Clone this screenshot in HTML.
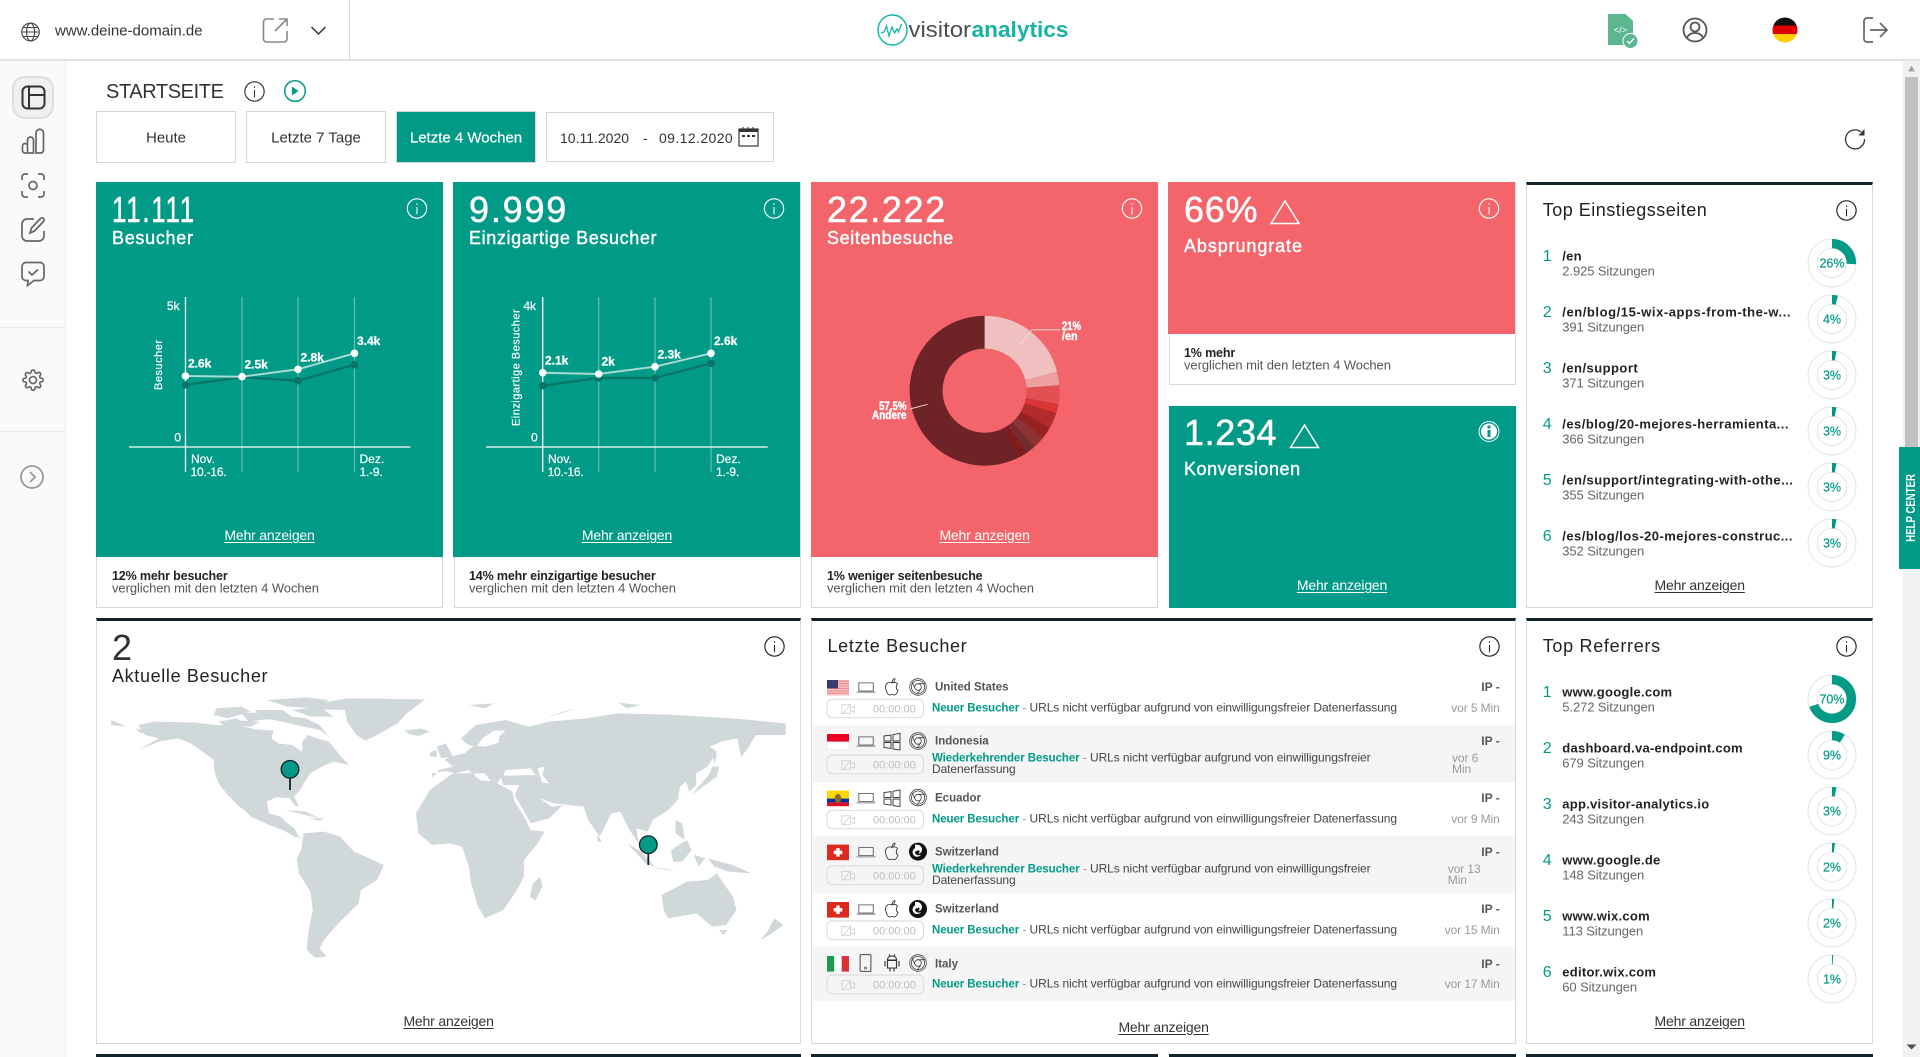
<!DOCTYPE html>
<html lang="de"><head><meta charset="utf-8"><title>Visitor Analytics</title>
<style>
html,body{margin:0;padding:0;background:#fff}
body{width:1920px;height:1057px;overflow:hidden;position:relative;font-family:"Liberation Sans",Arial,sans-serif;color:#333}
.b{position:absolute;box-sizing:border-box}
.card{position:absolute;box-sizing:border-box;border:1.5px solid #d8d8d8;background:#fff}
.dark{border-top:3.5px solid #13232b}
.t{position:absolute;white-space:nowrap;line-height:1;transform:translateY(-50%)}
.c{position:absolute;white-space:nowrap;line-height:1;transform:translate(-50%,-50%)}
.w{color:#fff}
.big{font-size:36px}
.w.big{-webkit-text-stroke:.5px #fff}
.lab{font-size:18px;-webkit-text-stroke:.4px currentColor}
.more{font-size:14px;letter-spacing:-.18px;text-decoration:underline;text-underline-offset:2px;margin-top:-1px}
.fb{font-size:12.5px;font-weight:bold;letter-spacing:-.15px;color:#222}
.fs{font-size:13px;letter-spacing:-.07px;color:#555}
.num{font-size:16px;color:#009a87;margin-top:1px}
.nm{font-size:13px;font-weight:bold;letter-spacing:.26px;color:#222}
.l{letter-spacing:.46px}
.sb{font-size:13px;letter-spacing:-.1px;color:#666}
.cty{font-size:11.5px;font-weight:bold;color:#555;margin-top:1px}
.ip{font-size:12px;font-weight:bold;color:#555}
.tm{font-size:12px;letter-spacing:-.1px;color:#9a9a9a}
.dur{font-size:11px;color:#bdbdbd;margin-top:1px}
.msg{font-size:12px;letter-spacing:-.08px;color:#444}
.msg b{color:#009a87;font-size:11.5px}
.msg i{font-style:normal;color:#999}
svg text{font-family:"Liberation Sans",Arial,sans-serif}
</style></head><body>

<!-- scrollbar -->
<div class="b" style="left:1903px;top:60px;width:17px;height:997px;background:#f1f1f1"></div>
<div class="b" style="left:1905px;top:77px;width:13px;height:485px;background:#c1c1c1"></div>

<!-- sidebar -->
<div class="b" style="left:0;top:60px;width:66px;height:997px;background:#f9fafa;border-right:1px solid #eceeee"></div>
<div class="b" style="left:0;top:327px;width:66px;height:1px;background:#e8eaea"></div>
<div class="b" style="left:0;top:431px;width:66px;height:1px;background:#e8eaea"></div>
<div class="b" style="left:12px;top:76px;width:42px;height:43px;background:#f0f0f0;border:2px solid #dedede;border-radius:13px"></div>

<!-- header -->
<div class="b" style="left:0;top:0;width:1920px;height:61px;background:#fff;border-bottom:2px solid #dfe4e7"></div>
<div class="b" style="left:349px;top:0;width:1px;height:60px;background:#d5d9db"></div>
<div class="t" style="left:55px;top:30.5px;font-size:15px;color:#333">www.deine-domain.de</div>

<!-- page head -->
<div class="t" style="left:106px;top:91.5px;font-size:20px;letter-spacing:-.4px;color:#333">STARTSEITE</div>
<div class="b" style="left:96px;top:111px;width:140px;height:52px;border:1.5px solid #d6d6d6"></div>
<div class="b" style="left:246px;top:111px;width:140px;height:52px;border:1.5px solid #d6d6d6"></div>
<div class="b" style="left:396px;top:111px;width:140px;height:52px;background:#009a87;border:1.5px solid #d6d6d6"></div>
<div class="b" style="left:546px;top:112px;width:228px;height:50px;border:1.5px solid #d6d6d6"></div>
<div class="c" style="left:166px;top:138px;font-size:15px">Heute</div>
<div class="c" style="left:316px;top:138px;font-size:15px">Letzte 7 Tage</div>
<div class="c w" style="left:466px;top:138px;font-size:15px;-webkit-text-stroke:.2px #fff">Letzte 4 Wochen</div>
<div class="t" style="left:560px;top:138px;font-size:14px">10.11.2020</div>
<div class="t" style="left:643px;top:138px;font-size:14px">-</div>
<div class="t" style="left:659px;top:138px;font-size:14px;letter-spacing:.4px">09.12.2020</div>

<!-- top cards -->
<div class="card" style="left:96px;top:182px;width:347px;height:426px"><div style="position:absolute;left:-1.5px;top:-1.5px;width:347px;height:375px;background:#009a87"></div></div>
<div class="card" style="left:453.6px;top:182px;width:347px;height:426px"><div style="position:absolute;left:-1.5px;top:-1.5px;width:347px;height:375px;background:#009a87"></div></div>
<div class="card" style="left:811.3px;top:182px;width:347px;height:426px"><div style="position:absolute;left:-1.5px;top:-1.5px;width:347px;height:375px;background:#f3656a"></div></div>
<div class="card" style="left:1168.5px;top:182px;width:347px;height:202.5px"><div style="position:absolute;left:-1.5px;top:-1.5px;width:347px;height:152px;background:#f3656a"></div></div>
<div class="b" style="left:1168.5px;top:406px;width:347px;height:202px;background:#009a87"></div>
<div class="card dark" style="left:1526px;top:182px;width:347px;height:426px"></div>
<div class="card dark" style="left:96px;top:618px;width:704.5px;height:425.5px"></div>
<div class="card dark" style="left:811.3px;top:618px;width:704.5px;height:425.5px"></div>
<div class="card dark" style="left:1526px;top:618px;width:347px;height:425.5px"></div>
<div class="b" style="left:96px;top:1054px;width:704.5px;height:3px;background:#13232b"></div>
<div class="b" style="left:811.3px;top:1054px;width:346.7px;height:3px;background:#13232b"></div>
<div class="b" style="left:1168.5px;top:1054px;width:347px;height:3px;background:#13232b"></div>
<div class="b" style="left:1526px;top:1054px;width:347px;height:3px;background:#13232b"></div>

<!-- visitor rows bg -->
<div class="b" style="left:812.5px;top:725px;width:702px;height:57px;background:#f5f5f5"></div>
<div class="b" style="left:812.5px;top:836px;width:702px;height:57px;background:#f5f5f5"></div>
<div class="b" style="left:812.5px;top:947px;width:702px;height:54px;background:#f5f5f5"></div>

<!-- world map -->
<svg style="position:absolute;left:90px;top:610px" width="720" height="447" viewBox="0 0 1568 1341" preserveAspectRatio="none" fill="#d1d8da">
<path d="M105 345L140 335 230 338 270 345 320 345 360 358 400 362 395 385 410 400 440 405 462 425 462 395 475 375 495 385 520 395 535 420 550 445 565 465 530 455 505 470 480 490 470 510 460 535 445 560 455 590 445 585 435 565 405 562 385 575 390 610 415 620 430 640 445 655 455 680 465 685 445 680 420 660 390 645 350 620 335 598 325 590 300 555 280 520 270 480 270 450 250 430 220 400 190 385 150 395 105 420 150 385 120 375Z"/>
<path d="M385 270L470 262 520 270 490 295 430 290Z"/><path d="M275 295L330 290 350 305 300 325 270 315Z"/><path d="M360 300L420 300 440 320 470 325 500 345 520 380 500 360 450 345 400 330 370 325Z"/><path d="M300 330L370 335 350 350 310 345Z"/><path d="M46 330L80 350 46 345Z"/><path d="M100 355L130 365 110 370Z"/>
<path d="M440 300L500 290 530 320 480 320Z"/><path d="M330 310L390 305 400 325 345 335Z"/><path d="M280 335L320 325 340 345 290 345Z"/>
<path d="M480 285L560 265 730 268 690 310 670 340 625 375 600 392 580 375 560 335 555 300 490 298Z"/>
<path d="M685 362L720 355 740 365 715 378 695 372Z"/>
<path d="M425 600L470 605 500 625 460 612Z"/><path d="M478 625L510 625 500 632Z"/>
<path d="M465 670L510 665 545 680 575 725 600 740 640 765 625 810 590 840 585 880 545 935 525 965 510 990 500 1015 515 1040 490 1043 472 1020 475 970 485 900 480 845 455 790 450 745 460 720Z"/>
<path d="M710 610L740 540 790 490 830 490 850 510 880 515 920 545 925 575 945 620 960 660 990 665 975 700 945 750 945 800 930 840 900 900 860 925 845 890 830 820 825 770 810 710 785 700 745 705 715 670Z"/>
<path d="M980 800L985 830 970 872 958 860 965 820Z"/>
<path d="M745 505L745 490 775 483 795 490 825 480 848 520 835 490 860 490 882 530 895 503 900 525 935 525 925 555 960 640 1000 625 1030 585 1005 590 980 565 1010 580 1075 590 1085 630 1110 680 1135 610 1155 605 1175 660 1195 700 1190 655 1215 665 1225 630 1260 600 1280 570 1285 530 1298 515 1305 545 1320 525 1320 490 1345 470 1365 425 1350 410 1375 395 1410 385 1418 442 1435 410 1450 375 1515 375 1515 340 1400 325 1280 315 1150 310 1080 325 1000 335 955 350 905 330 840 345 808 385 822 403 842 410 855 385 880 362 905 362 892 378 890 398 860 410 835 408 815 430 785 440 772 448 790 470 760 480Z"/>
<path fill="#fff" d="M905 480L960 475 970 495 900 497Z"/><path fill="#fff" d="M975 475L990 470 985 495 1000 520 985 518Z"/>
<path d="M755 410L775 400 790 440 765 445Z"/><path d="M742 425L755 420 755 440 740 440Z"/>
<path d="M1310 555L1365 500 1370 470 1355 470 1350 490Z"/><path d="M1355 425L1365 430 1360 465Z"/>
<path d="M1170 700L1200 725 1230 770 1210 760Z"/><path d="M1215 770L1280 785 1250 775Z"/><path d="M1265 720L1300 690 1310 720 1290 755 1270 755Z"/><path d="M1275 630L1290 640 1295 690 1275 670Z"/><path d="M1315 735L1340 745 1325 770Z"/><path d="M1345 745L1400 765 1440 790 1390 785 1360 770Z"/><path d="M1105 675L1115 695 1105 695Z"/>
<path d="M1245 855L1300 815 1345 810 1365 790 1400 860 1408 900 1385 945 1355 950 1320 910 1260 925 1250 905Z"/><path d="M1370 960L1388 960 1380 975Z"/>
<path d="M1490 925L1510 945 1490 965 1480 975 1460 990 1475 965Z"/>
<path d="M990 325L1060 295 1030 305Z"/><path d="M825 285L880 280 860 295Z"/><path d="M1150 278L1200 285 1170 295Z"/>
</svg>

<!-- graphics overlay -->
<svg style="position:absolute;left:0;top:0" width="1920" height="1057" viewBox="0 0 1920 1057">
<defs>
<symbol id="info" viewBox="0 0 20 20"><circle cx="10" cy="10" r="9.2" fill="none" stroke="currentColor" stroke-width="1.1"/><rect x="9.5" y="8.5" width="1" height="7" fill="currentColor"/><rect x="9.5" y="5" width="1" height="1.6" fill="currentColor"/></symbol>
<symbol id="cam" viewBox="0 0 20 14" overflow="visible"><g fill="none" stroke="#cfcfcf" stroke-width="1"><rect x="1" y="2" width="10" height="10"/><path d="M11 6l5-2v7l-5-2M2 13L12 1"/></g></symbol>
<symbol id="lap" viewBox="0 0 20 11"><rect x="2.5" y=".5" width="15" height="8.5" fill="none" stroke="#666" stroke-width="1"/><rect x="0" y="9.5" width="20" height="1.5" fill="#aaa"/></symbol>
<symbol id="apple" viewBox="0 0 16 18"><path fill="none" stroke="#222" stroke-width=".8" d="M8 5C6.500 4 5 4 3.500 5 1.500 6.500 1 9 2 12c.7 2.300 2 4.800 3.500 5 1 .1 1.500-.5 2.500-.5s1.500.6 2.500.5c1.500-.2 2.800-2.600 3.500-4.500-2-1-2.500-4.500-.5-6.500-1-1.500-3-2-5.500-1.500zM8 4.500C8 2.500 9.500.8 11 .5c0 2-1.200 3.700-3 4z"/></symbol>
<symbol id="win" viewBox="0 0 18 18"><g fill="none" stroke="#333" stroke-width=".9"><path d="M1 3.500L8 2.500V8.500H1zM10 2.200L17 .8V8.500H10zM1 10H8V16L1 15zM10 10H17V17.500L10 16.500z"/></g></symbol>
<symbol id="chr" viewBox="0 0 18 18"><g fill="none" stroke="#444" stroke-width=".8"><circle cx="9" cy="9" r="8.300"/><circle cx="9" cy="9" r="6.600"/><circle cx="9" cy="9" r="3.300"/><path d="M9 5.700H16M6 10.500L3 4M11.800 11L8 16.500"/></g></symbol>
<symbol id="ff" viewBox="0 0 18 18"><circle cx="9" cy="9" r="9" fill="#111"/><path fill="#fff" d="M6 2C9 1.500 13 3 13 7c0 2.500-2 4.500-4 4 1.500-.5 2-2 1-3.500C9 8 7 8 6 9.500c0 2.500 3 4 6 2.500-1 2-4.500 3-7 1C3 11 3 7 6 5.500c0-1.500 0-2.500 0-3.500z"/></symbol>
<symbol id="and" viewBox="0 0 16 18"><path fill="none" stroke="#333" stroke-width="1.100" d="M3.500 6.500h9v7.500h-9zM3.500 6C3.500 3 6 2 8 2s4.500 1 4.500 4zM1 7v5.500M15 7v5.500M6 14v3.500M10 14v3.500M5 .5l1.500 2M11 .5l-1.500 2"/></symbol>
<symbol id="mob" viewBox="0 0 12 18"><rect x=".6" y=".6" width="10.800" height="16.800" rx="1" fill="none" stroke="#444" stroke-width="1"/><circle cx="6" cy="14" r="1" fill="none" stroke="#444" stroke-width=".7"/></symbol>
</defs>

<!-- header icons -->
<g fill="none" stroke="#444" stroke-width="1.100"><circle cx="30.500" cy="32" r="8.800"/><ellipse cx="30.500" cy="32" rx="4" ry="8.800"/><path d="M21.700 32h17.600M23 27.500h15M23 36.500h15"/></g>
<path d="M274 19h-7.500a3 3 0 0 0-3 3v17a3 3 0 0 0 3 3h17.500a3 3 0 0 0 3-3v-8M275 31L287 19M279 19h8v7" fill="none" stroke="#888" stroke-width="1.600"/>
<path d="M311.500 27l7 7 7-7" fill="none" stroke="#333" stroke-width="1.500"/>
<!-- logo -->
<ellipse cx="892.500" cy="30" rx="14.500" ry="15" fill="none" stroke="#16b3a3" stroke-width="1.400"/>
<path d="M881 33l3-1 2.500-6 2.500 10 3-9 2.500 6 2.500-4 1.500 3 3-8" fill="none" stroke="#16b3a3" stroke-width="1.300"/>
<text x="908.500" y="37" font-size="22" fill="#4a4f52" textLength="62.500" lengthAdjust="spacingAndGlyphs">visitor</text>
<text x="971.500" y="37" font-size="22" font-weight="bold" fill="#16b3a3" textLength="97" lengthAdjust="spacingAndGlyphs">analytics</text>
<!-- header right -->
<path d="M1608 14h17.500l7.500 7v24h-25z" fill="#5cb68f"/><text x="1620.500" y="33" font-size="9.500" fill="#fff" text-anchor="middle">&lt;/&gt;</text>
<circle cx="1630.500" cy="41" r="7.500" fill="#5cb68f" stroke="#fff" stroke-width="1"/><path d="M1627 41l2.500 2.500 4.500-5" fill="none" stroke="#fff" stroke-width="1.400"/>
<g fill="none" stroke="#555" stroke-width="1.800"><circle cx="1695" cy="30" r="11.500"/><circle cx="1695" cy="27" r="4.500"/><path d="M1687 38c1.500-4 4.500-5 8-5s6.500 1 8 5"/></g>
<clipPath id="fc"><circle cx="1785" cy="30" r="12.500"/></clipPath>
<g clip-path="url(#fc)"><rect x="1770" y="17" width="30" height="9" fill="#111"/><rect x="1770" y="25.500" width="30" height="8.500" fill="#dd0000"/><rect x="1770" y="34" width="30" height="9" fill="#ffce00"/></g>
<path d="M1873 18h-6a3 3 0 0 0-3 3v18a3 3 0 0 0 3 3h6M1870 30h16M1880 23l7 7-7 7" fill="none" stroke="#666" stroke-width="1.700"/>
<!-- page title icons -->
<use href="#info" x="244" y="81" width="21" height="21" color="#333"/>
<circle cx="295" cy="91" r="10.300" fill="none" stroke="#009a87" stroke-width="1.500"/><path d="M292 86.500v9l6.500-4.500z" fill="#009a87"/>
<!-- calendar -->
<g fill="none" stroke="#333" stroke-width="1.200"><rect x="739" y="129" width="19" height="17"/></g><rect x="739" y="129" width="19" height="3" fill="#333"/><path d="M743 127v3M748 127v3M753 127v3" stroke="#333"/><rect x="742" y="135" width="3" height="2" fill="#333"/><rect x="747" y="135" width="3" height="2" fill="#333"/><rect x="752" y="135" width="3" height="2" fill="#333"/>
<!-- refresh -->
<path d="M1861 132A9.500 9.500 0 1 0 1864.500 139" fill="none" stroke="#333" stroke-width="1.300"/><path d="M1864.500 129v6.500h-6z" fill="#333"/>
<!-- sidebar icons -->
<rect x="22.500" y="86.500" width="22" height="22" rx="5" fill="none" stroke="#333" stroke-width="2"/><path d="M29 87v21M29 95h15" stroke="#333" stroke-width="2"/>
<g fill="none" stroke="#666" stroke-width="1.700"><path d="M22.500 150v-4a2.500 2.500 0 0 1 5 0v7h-2.500a2.500 2.500 0 0 1-2.500-3zM27.500 153v-13a3 3 0 0 1 6 0v13zM36 153V133a3.500 3.500 0 0 1 7.500 0v17a3 3 0 0 1-3 3z"/>
<path d="M22 180v-3a3 3 0 0 1 3-3h3M38 174h3a3 3 0 0 1 3 3v3M44 191v3a3 3 0 0 1-3 3h-3M28 197h-3a3 3 0 0 1-3-3v-3"/><circle cx="33" cy="185.500" r="4"/>
<path d="M34 219h-7a5 5 0 0 0-5 5v12a5 5 0 0 0 5 5h12a5 5 0 0 0 5-5v-5M30 233l1.500-5 9-9.500a2 2 0 0 1 3 3l-9 9.500z"/>
<path d="M26 262.500h14a4 4 0 0 1 4 4v10a4 4 0 0 1-4 4h-6l-6.500 5 .5-5h-2a4 4 0 0 1-4-4v-10a4 4 0 0 1 4-4zM28.500 271.500l3.500 3.500 6-5.500"/></g>
<g transform="translate(22,369) scale(.92)" fill="none" stroke="#666" stroke-width="1.800"><circle cx="12" cy="12" r="3.800"/><path d="M19.400 15a1.650 1.650 0 0 0 .33 1.820l.06.06a2 2 0 0 1 0 2.830 2 2 0 0 1-2.830 0l-.06-.06a1.650 1.650 0 0 0-1.820-.33 1.650 1.650 0 0 0-1 1.510V21a2 2 0 0 1-2 2 2 2 0 0 1-2-2v-.09A1.650 1.650 0 0 0 9 19.400a1.650 1.650 0 0 0-1.820.33l-.06.06a2 2 0 0 1-2.830 0 2 2 0 0 1 0-2.830l.06-.06a1.650 1.650 0 0 0 .33-1.820 1.650 1.650 0 0 0-1.510-1H3a2 2 0 0 1-2-2 2 2 0 0 1 2-2h.09A1.650 1.650 0 0 0 4.600 9a1.650 1.650 0 0 0-.33-1.820l-.06-.06a2 2 0 0 1 0-2.830 2 2 0 0 1 2.830 0l.06.06a1.650 1.650 0 0 0 1.820.33H9a1.650 1.650 0 0 0 1-1.510V3a2 2 0 0 1 2-2 2 2 0 0 1 2 2v.09a1.650 1.650 0 0 0 1 1.510 1.650 1.650 0 0 0 1.820-.33l.06-.06a2 2 0 0 1 2.830 0 2 2 0 0 1 0 2.830l-.06.06a1.650 1.650 0 0 0-.33 1.820V9a1.650 1.650 0 0 0 1.510 1H21a2 2 0 0 1 2 2 2 2 0 0 1-2 2h-.09a1.650 1.650 0 0 0-1.510 1z"/></g>
<circle cx="32" cy="477" r="11" fill="none" stroke="#999" stroke-width="1.800"/><path d="M30 472l5 5-5 5" fill="none" stroke="#999" stroke-width="1.800"/>

<!-- card info icons -->
<use href="#info" x="406.500" y="198" width="21" height="21" color="#fff"/>
<use href="#info" x="763.500" y="198" width="21" height="21" color="#fff"/>
<use href="#info" x="1121.500" y="198" width="21" height="21" color="#fff"/>
<use href="#info" x="1478.500" y="198" width="21" height="21" color="#fff"/>
<circle cx="1489" cy="431.500" r="10" fill="none" stroke="#fff" stroke-width="1"/><circle cx="1489" cy="431.500" r="8" fill="#fff"/><rect x="1487.500" y="430" width="3" height="7" fill="#009a87"/><rect x="1487.500" y="425.500" width="3" height="3" fill="#009a87"/>
<use href="#info" x="1836" y="200" width="21" height="21" color="#222"/>
<use href="#info" x="764" y="636" width="21" height="21" color="#222"/>
<use href="#info" x="1479" y="636" width="21" height="21" color="#222"/>
<use href="#info" x="1836" y="636" width="21" height="21" color="#222"/>
<!-- triangles -->
<path d="M1285 201l-14 22.500h28z" fill="none" stroke="#fff" stroke-width="1.500"/>
<path d="M1304.500 425l-14 22.500h28z" fill="none" stroke="#fff" stroke-width="1.500"/>

<!-- chart 1 -->
<g stroke="#fff" fill="none"><path d="M185.500 297V472" stroke-width="1.300"/><path d="M129 447H410.500" stroke-width="1.300"/><path d="M242 297V472M298 297V472M354.500 297V472" stroke-opacity=".35" stroke-width="1.300"/></g>
<path d="M185.500 385L242 377 298 380.700 354.500 364.700" fill="none" stroke="#0a7566" stroke-width="2.300"/>
<g fill="#0a7566"><circle cx="185.500" cy="385" r="3.800"/><circle cx="242" cy="377" r="3.800"/><circle cx="298" cy="380.700" r="3.800"/><circle cx="354.500" cy="364.700" r="3.800"/></g>
<path d="M185.500 376L242 376.700 298 369.300 354.500 353.300" fill="none" stroke="#fff" stroke-opacity=".65" stroke-width="2"/>
<g fill="#fff"><circle cx="185.500" cy="376" r="3.800"/><circle cx="242" cy="376.700" r="3.800"/><circle cx="298" cy="369.300" r="3.800"/><circle cx="354.500" cy="353.300" r="3.800"/></g>
<g fill="#fff" font-size="12" stroke="#fff" stroke-width=".2">
<text x="179.500" y="310" text-anchor="end">5k</text><text x="181" y="441.500" text-anchor="end">0</text>
<text transform="translate(162,365) rotate(-90)" text-anchor="middle" font-size="11" textLength="50">Besucher</text>
<g font-weight="bold" stroke-width=".25"><text x="188" y="367.500">2.6k</text><text x="244.500" y="368.500">2.5k</text><text x="300.500" y="361.500">2.8k</text><text x="357" y="345">3.4k</text></g>
<text x="191" y="463">Nov.</text><text x="190.500" y="476" letter-spacing="-.2">10.-16.</text><text x="359.500" y="463">Dez.</text><text x="359.500" y="476" letter-spacing="-.2">1.-9.</text>
</g>
<!-- chart 2 -->
<g stroke="#fff" fill="none"><path d="M542.700 297V472" stroke-width="1.300"/><path d="M486 447H767.700" stroke-width="1.300"/><path d="M598.700 297V472M655 297V472M711 297V472" stroke-opacity=".35" stroke-width="1.300"/></g>
<path d="M542.700 385.700L598.700 378 655 378 711 363.300" fill="none" stroke="#0a7566" stroke-width="2.300"/>
<g fill="#0a7566"><circle cx="542.700" cy="385.700" r="3.800"/><circle cx="598.700" cy="378" r="3.800"/><circle cx="655" cy="378" r="3.800"/><circle cx="711" cy="363.300" r="3.800"/></g>
<path d="M542.700 372.700L598.700 374 655 366.700 711 353.300" fill="none" stroke="#fff" stroke-opacity=".65" stroke-width="2"/>
<g fill="#fff"><circle cx="542.700" cy="372.700" r="3.800"/><circle cx="598.700" cy="374" r="3.800"/><circle cx="655" cy="366.700" r="3.800"/><circle cx="711" cy="353.300" r="3.800"/></g>
<g fill="#fff" font-size="12" stroke="#fff" stroke-width=".2">
<text x="536" y="310" text-anchor="end">4k</text><text x="537.700" y="441.500" text-anchor="end">0</text>
<text transform="translate(519.500,367.700) rotate(-90)" text-anchor="middle" font-size="11" textLength="116.700">Einzigartige Besucher</text>
<g font-weight="bold" stroke-width=".25"><text x="545" y="364.500">2.1k</text><text x="601.500" y="365.500">2k</text><text x="657.500" y="358.500">2.3k</text><text x="714" y="345">2.6k</text></g>
<text x="548" y="463">Nov.</text><text x="547.500" y="476" letter-spacing="-.2">10.-16.</text><text x="716" y="463">Dez.</text><text x="716" y="476" letter-spacing="-.2">1.-9.</text>
</g>
<!-- pie -->
<g transform="translate(984.600,390.700) rotate(-90)" fill="none" stroke-width="33">
<circle r="58.500" pathLength="360" stroke="#6e2426"/>
<circle r="58.500" pathLength="360" stroke="#f0bfc0" stroke-dasharray="75.600 360"/>
<circle r="58.500" pathLength="360" stroke="#ee9fa0" stroke-dasharray="10.400 360" stroke-dashoffset="-75.600"/>
<circle r="58.500" pathLength="360" stroke="#e25052" stroke-dasharray="14.500 360" stroke-dashoffset="-86"/>
<circle r="58.500" pathLength="360" stroke="#dc3535" stroke-dasharray="7.100 360" stroke-dashoffset="-100.500"/>
<circle r="58.500" pathLength="360" stroke="#b32c2c" stroke-dasharray="12.400 360" stroke-dashoffset="-107.600"/>
<circle r="58.500" pathLength="360" stroke="#962323" stroke-dasharray="9 360" stroke-dashoffset="-120"/>
<circle r="58.500" pathLength="360" stroke="#8d3235" stroke-dasharray="9.800 360" stroke-dashoffset="-129"/>
<circle r="58.500" pathLength="360" stroke="#722c2e" stroke-dasharray="7.200 360" stroke-dashoffset="-138.800"/>
<circle r="58.500" pathLength="360" stroke="#801c1e" stroke-dasharray="7 360" stroke-dashoffset="-146"/>
</g>
<path d="M1020.400 344L1032 329.700H1060M910 409L927.600 404.300" fill="none" stroke="#f3d5d5" stroke-width="1"/>
<g fill="#fff" font-size="11.500" font-weight="bold" stroke="#fff" stroke-width=".4"><text x="1062" y="330" textLength="19" lengthAdjust="spacingAndGlyphs">21%</text><text x="1062" y="340" textLength="15.600" lengthAdjust="spacingAndGlyphs">/en</text><text x="879" y="410" textLength="27.500" lengthAdjust="spacingAndGlyphs">57,5%</text><text x="872" y="419" textLength="34.400" lengthAdjust="spacingAndGlyphs">Andere</text></g>

<!-- pins -->
<g stroke="#13232b"><path d="M290 778V790" stroke-width="1.800"/><circle cx="290" cy="769.300" r="8.800" fill="#009a87" stroke-width="1.300"/><path d="M648.300 853V865" stroke-width="1.800"/><circle cx="648.300" cy="844.700" r="8.800" fill="#009a87" stroke-width="1.300"/></g>

<!-- ring donuts -->
<g fill="none">
<g transform="translate(1832,263)"><circle r="24" stroke="#dfe4e4"/><circle r="14.700" stroke="#dfe4e4"/><circle r="19.350" pathLength="100" stroke="#009a87" stroke-width="9.300" stroke-dasharray="26 100" transform="rotate(-90)"/></g>
<g transform="translate(1832,319)"><circle r="24" stroke="#dfe4e4"/><circle r="14.700" stroke="#dfe4e4"/><circle r="19.350" pathLength="100" stroke="#009a87" stroke-width="9.300" stroke-dasharray="4 100" transform="rotate(-90)"/></g>
<g transform="translate(1832,375)"><circle r="24" stroke="#dfe4e4"/><circle r="14.700" stroke="#dfe4e4"/><circle r="19.350" pathLength="100" stroke="#009a87" stroke-width="9.300" stroke-dasharray="3 100" transform="rotate(-90)"/></g>
<g transform="translate(1832,431)"><circle r="24" stroke="#dfe4e4"/><circle r="14.700" stroke="#dfe4e4"/><circle r="19.350" pathLength="100" stroke="#009a87" stroke-width="9.300" stroke-dasharray="3 100" transform="rotate(-90)"/></g>
<g transform="translate(1832,487)"><circle r="24" stroke="#dfe4e4"/><circle r="14.700" stroke="#dfe4e4"/><circle r="19.350" pathLength="100" stroke="#009a87" stroke-width="9.300" stroke-dasharray="3 100" transform="rotate(-90)"/></g>
<g transform="translate(1832,543)"><circle r="24" stroke="#dfe4e4"/><circle r="14.700" stroke="#dfe4e4"/><circle r="19.350" pathLength="100" stroke="#009a87" stroke-width="9.300" stroke-dasharray="3 100" transform="rotate(-90)"/></g>
<g transform="translate(1832,699)"><circle r="24" stroke="#dfe4e4"/><circle r="14.700" stroke="#dfe4e4"/><circle r="19.350" pathLength="100" stroke="#009a87" stroke-width="9.300" stroke-dasharray="70 100" transform="rotate(-90)"/></g>
<g transform="translate(1832,755)"><circle r="24" stroke="#dfe4e4"/><circle r="14.700" stroke="#dfe4e4"/><circle r="19.350" pathLength="100" stroke="#009a87" stroke-width="9.300" stroke-dasharray="9 100" transform="rotate(-90)"/></g>
<g transform="translate(1832,811)"><circle r="24" stroke="#dfe4e4"/><circle r="14.700" stroke="#dfe4e4"/><circle r="19.350" pathLength="100" stroke="#009a87" stroke-width="9.300" stroke-dasharray="3 100" transform="rotate(-90)"/></g>
<g transform="translate(1832,867)"><circle r="24" stroke="#dfe4e4"/><circle r="14.700" stroke="#dfe4e4"/><circle r="19.350" pathLength="100" stroke="#009a87" stroke-width="9.300" stroke-dasharray="2 100" transform="rotate(-90)"/></g>
<g transform="translate(1832,923)"><circle r="24" stroke="#dfe4e4"/><circle r="14.700" stroke="#dfe4e4"/><circle r="19.350" pathLength="100" stroke="#009a87" stroke-width="9.300" stroke-dasharray="1.500 100" transform="rotate(-90)"/></g>
<g transform="translate(1832,979)"><circle r="24" stroke="#dfe4e4"/><circle r="14.700" stroke="#dfe4e4"/><circle r="19.350" pathLength="100" stroke="#009a87" stroke-width="9.300" stroke-dasharray=".8 100" transform="rotate(-90)"/></g>
</g>
<g fill="#009a87" font-size="12.500" text-anchor="middle" stroke="#009a87" stroke-width=".2">
<text x="1832" y="267.500">26%</text><text x="1832" y="323.500">4%</text><text x="1832" y="379.500">3%</text><text x="1832" y="435.500">3%</text><text x="1832" y="491.500">3%</text><text x="1832" y="547.500">3%</text>
<text x="1832" y="703.500">70%</text><text x="1832" y="759.500">9%</text><text x="1832" y="815.500">3%</text><text x="1832" y="871.500">2%</text><text x="1832" y="927.500">2%</text><text x="1832" y="983.500">1%</text>
</g>

<!-- visitor rows icons -->
<!-- row 1 US -->
<g transform="translate(827,680)"><rect width="22" height="15.600" fill="#f4c7c7"/><path d="M0 1.200H22M0 3.600H22M0 6H22M0 8.400H22M0 10.800H22M0 13.200H22" stroke="#e88" stroke-width="1.100"/><rect width="11" height="8.400" fill="#3c3b6e"/>
<use href="#lap" x="29.400" y="2.300" width="19.300" height="10.700"/><use href="#apple" x="57" y="-2" width="16" height="18"/><use href="#chr" x="82" y="-2" width="18" height="18"/>
<rect y="19.300" width="96.500" height="18.400" rx="5" fill="none" stroke="#dedede" stroke-width="1.200"/><use href="#cam" x="14" y="23" width="17" height="12"/></g>
<!-- row 2 ID -->
<g transform="translate(827,734)"><rect width="22" height="7.800" fill="#ee0022"/><rect y="7.800" width="22" height="7.800" fill="#fff" stroke="#ddd" stroke-width=".5"/>
<use href="#lap" x="29.400" y="2.300" width="19.300" height="10.700"/><use href="#win" x="56" y="-1.500" width="18" height="18"/><use href="#chr" x="82" y="-2" width="18" height="18"/>
<rect y="21" width="96.500" height="18.700" rx="5" fill="none" stroke="#dedede" stroke-width="1.200"/><use href="#cam" x="14" y="25" width="17" height="12"/></g>
<!-- row 3 EC -->
<g transform="translate(827,790.600)"><rect width="22" height="8" fill="#ffd800"/><rect y="8" width="22" height="3.800" fill="#0033a0"/><rect y="11.800" width="22" height="3.800" fill="#d91023"/><ellipse cx="11" cy="7.800" rx="3.200" ry="4.500" fill="#8a6a2a"/>
<use href="#lap" x="29.400" y="2.300" width="19.300" height="10.700"/><use href="#win" x="56" y="-1.500" width="18" height="18"/><use href="#chr" x="82" y="-2" width="18" height="18"/>
<rect y="19.700" width="96.500" height="18.400" rx="5" fill="none" stroke="#dedede" stroke-width="1.200"/><use href="#cam" x="14" y="23.500" width="17" height="12"/></g>
<!-- row 4 CH -->
<g transform="translate(827,844.600)"><rect width="22" height="15.600" fill="#dd2a1e"/><rect x="9.300" y="3.500" width="3.400" height="8.600" fill="#fff"/><rect x="6.700" y="6.100" width="8.600" height="3.400" fill="#fff"/>
<use href="#lap" x="29.400" y="2.300" width="19.300" height="10.700"/><use href="#apple" x="57" y="-2" width="16" height="18"/><use href="#ff" x="82" y="-2" width="18" height="18"/>
<rect y="21.400" width="96.500" height="18.700" rx="5" fill="none" stroke="#dedede" stroke-width="1.200"/><use href="#cam" x="14" y="25" width="17" height="12"/></g>
<!-- row 5 CH -->
<g transform="translate(827,902)"><rect width="22" height="15.600" fill="#dd2a1e"/><rect x="9.300" y="3.500" width="3.400" height="8.600" fill="#fff"/><rect x="6.700" y="6.100" width="8.600" height="3.400" fill="#fff"/>
<use href="#lap" x="29.400" y="2.300" width="19.300" height="10.700"/><use href="#apple" x="57" y="-2" width="16" height="18"/><use href="#ff" x="82" y="-2" width="18" height="18"/>
<rect y="19" width="96.500" height="18.700" rx="5" fill="none" stroke="#dedede" stroke-width="1.200"/><use href="#cam" x="14" y="23" width="17" height="12"/></g>
<!-- row 6 IT -->
<g transform="translate(827,956)"><rect width="7.300" height="15.600" fill="#1d9a4d"/><rect x="7.300" width="7.400" height="15.600" fill="#fff"/><rect x="14.700" width="7.300" height="15.600" fill="#d9303c"/>
<use href="#mob" x="32.500" y="-2" width="12" height="18"/><use href="#and" x="57" y="-2" width="16" height="18"/><use href="#chr" x="82" y="-2" width="18" height="18"/>
<rect y="19" width="96.500" height="18.700" rx="5" fill="none" stroke="#dedede" stroke-width="1.200"/><use href="#cam" x="14" y="23" width="17" height="12"/></g>

<!-- scroll arrows -->
<path d="M1908 71.500l3.500-6 3.500 6z" fill="#a3a3a3"/><path d="M1906.500 1044.500h10l-5 5z" fill="#505050"/>
<!-- help center -->
<rect x="1899" y="447" width="21" height="122" fill="#009a87"/>
<text transform="translate(1915,541.700) rotate(-90)" fill="#fff" font-size="12.500" font-weight="bold" textLength="67.700" lengthAdjust="spacingAndGlyphs">HELP CENTER</text>
</svg>

<!-- Card text -->
<div class="t w big" style="left:112px;top:210px;letter-spacing:2.400px;transform:translateY(-50%) scaleX(.72);transform-origin:left center">11.111</div>
<div class="t w lab" style="left:112px;top:237.500px;letter-spacing:.7px">Besucher</div>
<div class="c w more" style="left:269.500px;top:535.700px">Mehr anzeigen</div>
<div class="t fb" style="left:112px;top:576px">12% mehr besucher</div>
<div class="t fs" style="left:112px;top:588px">verglichen mit den letzten 4 Wochen</div>

<div class="t w big" style="left:469px;top:210px;letter-spacing:1.800px">9.999</div>
<div class="t w lab" style="left:469px;top:237.500px;letter-spacing:.62px">Einzigartige Besucher</div>
<div class="c w more" style="left:627px;top:535.700px">Mehr anzeigen</div>
<div class="t fb" style="left:469px;top:576px">14% mehr einzigartige besucher</div>
<div class="t fs" style="left:469px;top:588px">verglichen mit den letzten 4 Wochen</div>

<div class="t w big" style="left:827px;top:210px;letter-spacing:1.600px">22.222</div>
<div class="t w lab" style="left:827px;top:237.500px;letter-spacing:.6px">Seitenbesuche</div>
<div class="c w more" style="left:984.600px;top:535.700px">Mehr anzeigen</div>
<div class="t fb" style="left:827px;top:576px">1% weniger seitenbesuche</div>
<div class="t fs" style="left:827px;top:588px">verglichen mit den letzten 4 Wochen</div>

<div class="t w big" style="left:1184px;top:210px;letter-spacing:.7px">66%</div>
<div class="t w lab" style="left:1184px;top:246px;letter-spacing:.9px">Absprungrate</div>
<div class="t fb" style="left:1184px;top:352.700px">1% mehr</div>
<div class="t fs" style="left:1184px;top:364.700px">verglichen mit den letzten 4 Wochen</div>

<div class="t w big" style="left:1184px;top:432.500px;letter-spacing:.6px">1.234</div>
<div class="t w lab" style="left:1184px;top:469px;letter-spacing:.55px">Konversionen</div>
<div class="c w more" style="left:1342px;top:585.700px">Mehr anzeigen</div>

<!-- Top Einstiegsseiten -->
<div class="t" style="left:1542.700px;top:210px;font-size:18px;letter-spacing:.5px;color:#222">Top Einstiegsseiten</div>
<div class="t num" style="left:1542.700px;top:256px">1</div><div class="t nm" style="left:1562.300px;top:255.700px">/en</div><div class="t sb" style="left:1562.300px;top:270.700px">2.925 Sitzungen</div>
<div class="t num" style="left:1542.700px;top:312px">2</div><div class="t nm" style="left:1562.300px;top:311.700px;letter-spacing:.56px">/en/blog/15-wix-apps-from-the-w...</div><div class="t sb" style="left:1562.300px;top:326.700px">391 Sitzungen</div>
<div class="t num" style="left:1542.700px;top:368px">3</div><div class="t nm l" style="left:1562.300px;top:367.700px">/en/support</div><div class="t sb" style="left:1562.300px;top:382.700px">371 Sitzungen</div>
<div class="t num" style="left:1542.700px;top:424px">4</div><div class="t nm l" style="left:1562.300px;top:423.700px">/es/blog/20-mejores-herramienta...</div><div class="t sb" style="left:1562.300px;top:438.700px">366 Sitzungen</div>
<div class="t num" style="left:1542.700px;top:480px">5</div><div class="t nm l" style="left:1562.300px;top:479.700px">/en/support/integrating-with-othe...</div><div class="t sb" style="left:1562.300px;top:494.700px">355 Sitzungen</div>
<div class="t num" style="left:1542.700px;top:536px">6</div><div class="t nm l" style="left:1562.300px;top:535.700px">/es/blog/los-20-mejores-construc...</div><div class="t sb" style="left:1562.300px;top:550.700px">352 Sitzungen</div>
<div class="c more" style="left:1699.700px;top:585.700px">Mehr anzeigen</div>

<!-- Aktuelle Besucher -->
<div class="t big" style="left:112px;top:648px">2</div>
<div class="t" style="left:112px;top:675.700px;font-size:18px;letter-spacing:.65px;color:#222">Aktuelle Besucher</div>
<div class="c more" style="left:448.600px;top:1021.700px">Mehr anzeigen</div>

<!-- Letzte Besucher -->
<div class="t" style="left:827.500px;top:645.700px;font-size:18px;letter-spacing:.65px;color:#222">Letzte Besucher</div>

<div class="t cty" style="left:935px;top:687.300px">United States</div><div class="t ip" style="right:420.300px;top:687.300px">IP -</div>
<div class="t dur" style="left:873px;top:709.300px">00:00:00</div>
<div class="t msg" style="left:932px;top:708.300px"><b>Neuer Besucher</b> <i>-</i> URLs nicht verfügbar aufgrund von einwilligungsfreier Datenerfassung</div>
<div class="t tm" style="right:420.300px;top:708.300px">vor 5 Min</div>

<div class="t cty" style="left:935px;top:741.300px">Indonesia</div><div class="t ip" style="right:420.300px;top:741.300px">IP -</div>
<div class="t dur" style="left:873px;top:765px">00:00:00</div>
<div class="t msg" style="left:932px;top:758.300px"><b>Wiederkehrender Besucher</b> <i>-</i> URLs nicht verfügbar aufgrund von einwilligungsfreier</div>
<div class="t msg" style="left:932px;top:769.300px">Datenerfassung</div>
<div class="t tm" style="left:1452px;top:758.300px">vor 6</div><div class="t tm" style="left:1452px;top:769.300px">Min</div>

<div class="t cty" style="left:935px;top:798.300px">Ecuador</div><div class="t ip" style="right:420.300px;top:798.300px">IP -</div>
<div class="t dur" style="left:873px;top:820.300px">00:00:00</div>
<div class="t msg" style="left:932px;top:819.300px"><b>Neuer Besucher</b> <i>-</i> URLs nicht verfügbar aufgrund von einwilligungsfreier Datenerfassung</div>
<div class="t tm" style="right:420.300px;top:819.300px">vor 9 Min</div>

<div class="t cty" style="left:935px;top:852.300px">Switzerland</div><div class="t ip" style="right:420.300px;top:852.300px">IP -</div>
<div class="t dur" style="left:873px;top:876px">00:00:00</div>
<div class="t msg" style="left:932px;top:869.300px"><b>Wiederkehrender Besucher</b> <i>-</i> URLs nicht verfügbar aufgrund von einwilligungsfreier</div>
<div class="t msg" style="left:932px;top:880.300px">Datenerfassung</div>
<div class="t tm" style="left:1447.800px;top:869.300px">vor 13</div><div class="t tm" style="left:1447.800px;top:880.300px">Min</div>

<div class="t cty" style="left:935px;top:909.300px">Switzerland</div><div class="t ip" style="right:420.300px;top:909.300px">IP -</div>
<div class="t dur" style="left:873px;top:931px">00:00:00</div>
<div class="t msg" style="left:932px;top:930.300px"><b>Neuer Besucher</b> <i>-</i> URLs nicht verfügbar aufgrund von einwilligungsfreier Datenerfassung</div>
<div class="t tm" style="right:420.300px;top:930.300px">vor 15 Min</div>

<div class="t cty" style="left:935px;top:963.700px">Italy</div><div class="t ip" style="right:420.300px;top:963.700px">IP -</div>
<div class="t dur" style="left:873px;top:985px">00:00:00</div>
<div class="t msg" style="left:932px;top:984.300px"><b>Neuer Besucher</b> <i>-</i> URLs nicht verfügbar aufgrund von einwilligungsfreier Datenerfassung</div>
<div class="t tm" style="right:420.300px;top:984.300px">vor 17 Min</div>
<div class="c more" style="left:1163.600px;top:1027.700px">Mehr anzeigen</div>

<!-- Top Referrers -->
<div class="t" style="left:1542.700px;top:645.700px;font-size:18px;letter-spacing:.7px;color:#222">Top Referrers</div>
<div class="t num" style="left:1542.700px;top:692px">1</div><div class="t nm" style="left:1562.300px;top:691.700px">www.google.com</div><div class="t sb" style="left:1562.300px;top:706.700px">5.272 Sitzungen</div>
<div class="t num" style="left:1542.700px;top:748px">2</div><div class="t nm" style="left:1562.300px;top:747.700px">dashboard.va-endpoint.com</div><div class="t sb" style="left:1562.300px;top:762.700px">679 Sitzungen</div>
<div class="t num" style="left:1542.700px;top:804px">3</div><div class="t nm" style="left:1562.300px;top:803.700px">app.visitor-analytics.io</div><div class="t sb" style="left:1562.300px;top:818.700px">243 Sitzungen</div>
<div class="t num" style="left:1542.700px;top:860px">4</div><div class="t nm" style="left:1562.300px;top:859.700px">www.google.de</div><div class="t sb" style="left:1562.300px;top:874.700px">148 Sitzungen</div>
<div class="t num" style="left:1542.700px;top:916px">5</div><div class="t nm" style="left:1562.300px;top:915.700px">www.wix.com</div><div class="t sb" style="left:1562.300px;top:930.700px">113 Sitzungen</div>
<div class="t num" style="left:1542.700px;top:972px">6</div><div class="t nm" style="left:1562.300px;top:971.700px">editor.wix.com</div><div class="t sb" style="left:1562.300px;top:986.700px">60 Sitzungen</div>
<div class="c more" style="left:1699.700px;top:1021.700px">Mehr anzeigen</div>
</body></html>
